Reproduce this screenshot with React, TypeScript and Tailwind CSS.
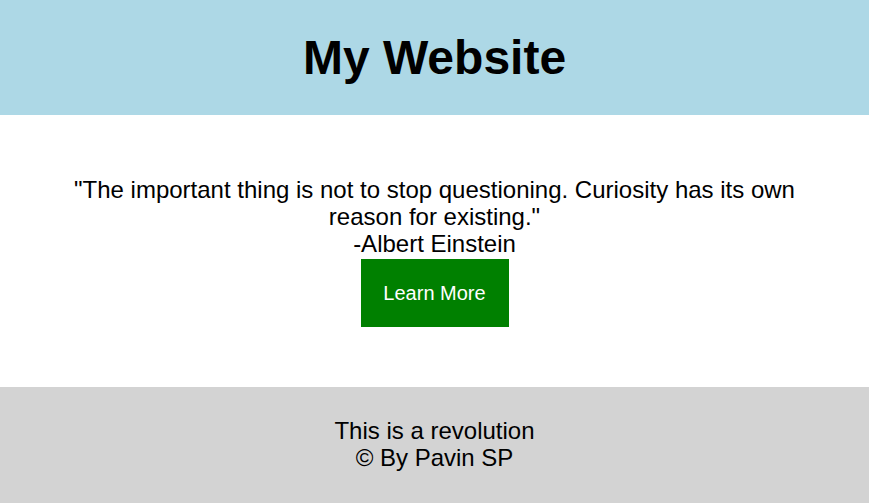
export default function App() {
  return (
    <div className="w-full min-h-[503px] flex flex-col text-black" style={{ fontFamily: '"Liberation Sans", Arial, sans-serif' }}>
      <header className="h-[115px] bg-[#add8e6] flex items-center justify-center">
        <h1 className="text-[48px] font-bold leading-[54px]">My Website</h1>
      </header>
      <main className="flex flex-col items-center px-[50px] pt-[61px] pb-[60px] bg-white">
        <p className="text-[24px] leading-[27px] text-center">
          "The important thing is not to stop questioning. Curiosity has its own reason for existing."
          <br />
          -Albert Einstein
        </p>
        <button className="mt-[2px] w-[148px] h-[68px] bg-[#008000] text-white text-[20px] flex items-center justify-center">
          Learn More
        </button>
      </main>
      <footer className="h-[116px] bg-[#d3d3d3] flex flex-col items-center pt-[30px] text-[24px] leading-[27px]">
        <p>This is a revolution</p>
        <p>© By Pavin SP</p>
      </footer>
    </div>
  );
}
